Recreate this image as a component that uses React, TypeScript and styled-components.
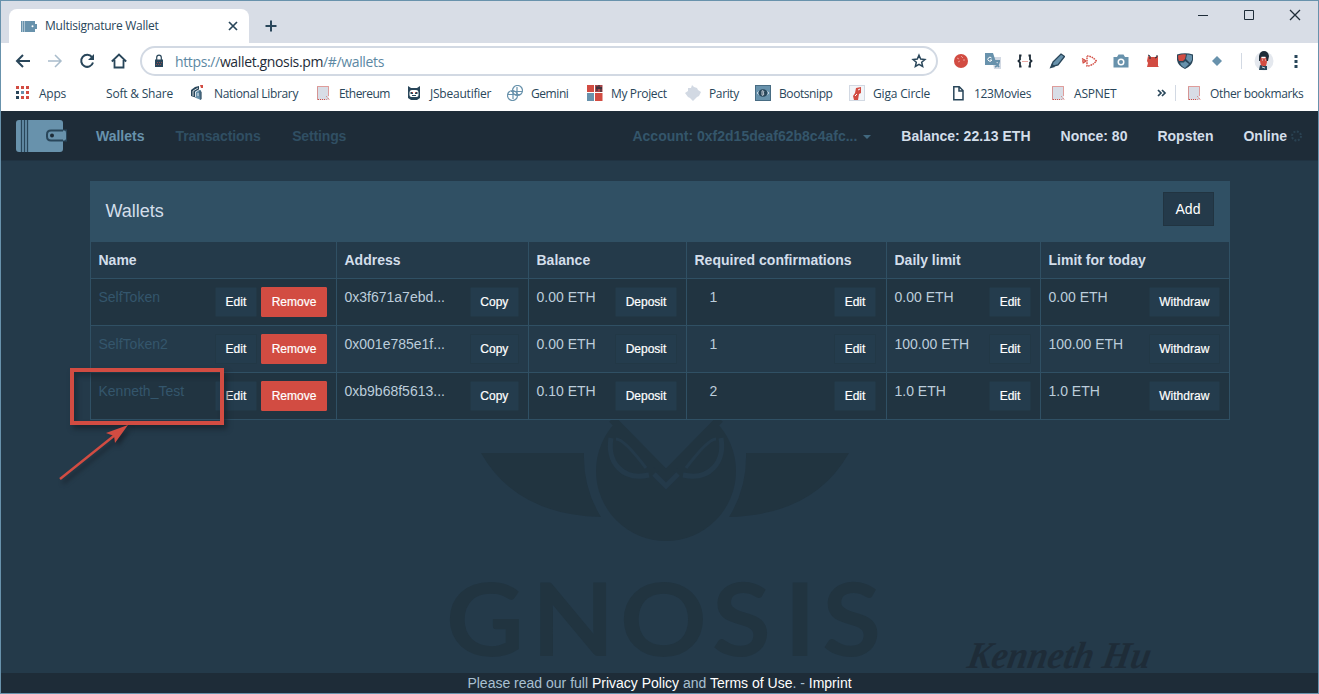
import React from "react";
import styled, { createGlobalStyle } from "styled-components";

const c = {
  blue: "#6892ac",
  strip: "#d8dde6",
  line: "#d2d9e3",
  ink: "#29465a",
  body: "#243a4a",
  nav: "#1e2c38",
  panel: "#305064",
  dark: "#213441",
  red: "#d24c42",
  pale: "#d3deea",
};

const Global = createGlobalStyle`
  *{box-sizing:border-box}
  body{margin:0;background:${c.body};overflow:hidden}
`;

const Window = styled.div`
  width: 1319px;
  height: 694px;
  border: 1px solid ${c.blue};
  display: flex;
  flex-direction: column;
  position: relative;
  background: ${c.body};
  font-family: "Liberation Sans", Arial, sans-serif;
`;

/* ---- browser chrome ---- */
const TabStrip = styled.div`
  height: 42px;
  flex: none;
  background: ${c.strip};
  display: flex;
  padding-left: 8px;
  font-family: "Open Sans", sans-serif;
`;
const Tab = styled.div`
  width: 240px;
  height: 34px;
  margin-top: 8px;
  background: #fff;
  border-radius: 8px 8px 0 0;
  display: flex;
  align-items: center;
  padding: 0 10px 1px 11px;
`;
const TabTitle = styled.span`
  flex: 1;
  margin-left: 8px;
  font-size: 12px;
  letter-spacing: -0.26px;
  color: ${c.ink};
  white-space: nowrap;
`;
const NewTab = styled.div`
  margin: 18px 0 0 15px;
  height: 14px;
  display: flex;
`;
const WindowButtons = styled.div`
  margin-left: auto;
  display: flex;
  gap: 34px;
  padding: 8px 17px 0 0;
  height: 20px;
`;
const Toolbar = styled.div`
  height: 37px;
  flex: none;
  background: #fff;
  display: flex;
  align-items: center;
  padding: 0 14px 1px 14px;
`;
const NavIcons = styled.div`
  display: flex;
  gap: 16px;
  width: 125px;
`;
const Omnibox = styled.div`
  width: 798px;
  height: 30px;
  border: 2px solid ${c.line};
  border-radius: 15px;
  display: flex;
  align-items: center;
  padding: 0 9px 0 10px;
`;
const Url = styled.span`
  flex: 1;
  margin-left: 9px;
  font: 14px "Open Sans", sans-serif;
  letter-spacing: -0.36px;
  color: #5c88a3;
  b {
    font-weight: 400;
    color: ${c.nav};
  }
`;
const Extensions = styled.div`
  display: flex;
  gap: 16px;
  margin-left: 15px;
`;
const Divider = styled.i<{ $gap: string }>`
  width: 1px;
  height: 16px;
  background: ${c.line};
  margin: ${(p) => p.$gap};
`;
const Bookmarks = styled.div`
  height: 31px;
  flex: none;
  background: #fff;
  display: flex;
  align-items: center;
  padding: 0 0 5px 14px;
`;
const Bookmark = styled.div<{ $w: number; $ls: number }>`
  width: ${(p) => p.$w}px;
  display: flex;
  align-items: center;
  gap: 8px;
  font: 12px "Open Sans", sans-serif;
  letter-spacing: ${(p) => p.$ls}px;
  color: ${c.ink};
  white-space: nowrap;
  svg {
    flex: none;
  }
`;

/* ---- wallet application ---- */
const NavBar = styled.nav`
  height: 50px;
  flex: none;
  background: ${c.nav};
  border-bottom: 1px solid #203342;
  display: flex;
  align-items: center;
  padding: 0 15px;
`;
const NavItem = styled.span<{ $tone?: string; $ls?: number; $ml?: number }>`
  font-size: 14px;
  font-weight: 700;
  line-height: 47px;
  padding-top: 2px;
  white-space: nowrap;
  color: ${(p) => p.$tone ?? c.pale};
  letter-spacing: ${(p) => p.$ls ?? 0}px;
  margin-left: ${(p) => p.$ml ?? 30}px;
`;
const Caret = styled.i`
  border: 4px solid transparent;
  border-top-color: #41687f;
  border-bottom: 0;
  margin-left: 6px;
  margin-top: 2px;
`;
const NavRight = styled.div`
  margin-left: auto;
  display: flex;
  align-items: center;
`;
const Main = styled.main`
  flex: 1;
  position: relative;
  padding: 20px 0 0 89px;
`;
const Watermark = styled.svg`
  position: absolute;
  left: 0;
  top: 0;
  overflow: visible;
`;
const Panel = styled.section`
  width: 1140px;
  position: relative;
  border: 1px solid ${c.panel};
`;
const PanelHead = styled.header`
  height: 60px;
  background: ${c.panel};
  display: flex;
  justify-content: space-between;
  align-items: flex-start;
  padding: 10px 15px 0 14.5px;
  font-size: 18px;
  line-height: 38px;
  color: ${c.pale};
`;
const AddButton = styled.button`
  width: 51px;
  height: 34px;
  padding: 0 1px 0 0;
  border: 1px solid ${c.dark};
  background: ${c.body};
  color: #fff;
  font: 14px "Liberation Sans", Arial, sans-serif;
`;
const Row = styled.div<{ $head?: boolean; $odd?: boolean }>`
  display: grid;
  grid-template-columns: 246px 192px 158px 200px 154px 188px;
  height: ${(p) => (p.$head ? 37 : 47)}px;
  border-bottom: 1px solid ${c.panel};
  background: ${(p) => (p.$odd ? c.dark : c.body)};
  font-size: 14px;
  font-weight: ${(p) => (p.$head ? 700 : 400)};
  line-height: 20px;
  color: ${(p) => (p.$head ? c.pale : "#bccddb")};
  &:last-child {
    height: 46px;
    border-bottom: 0;
  }
`;
const Cell = styled.div<{ $indent?: boolean }>`
  display: flex;
  gap: 4px;
  padding: 8px ${(p) => (p.$indent ? 10 : 9)}px 0 ${(p) => (p.$indent ? 22.5 : 7.5)}px;
  border-right: 1px solid ${c.panel};
  white-space: nowrap;
  &:last-child {
    border-right: 0;
  }
`;
const Value = styled.span<{ $dim?: boolean }>`
  margin-right: auto;
  color: ${(p) => (p.$dim ? "#34566c" : "inherit")};
`;
const Button = styled.button<{ $danger?: boolean }>`
  height: 30px;
  padding: 0 9.7px;
  border: 1px solid ${(p) => (p.$danger ? c.red : "#223846")};
  border-radius: 1px;
  background: ${(p) => (p.$danger ? c.red : "#243c4d")};
  color: #fff;
  font: 12px "Liberation Sans", Arial, sans-serif;
  -webkit-text-stroke: 0.2px #fff;
`;
const Footer = styled.footer`
  height: 20px;
  flex: none;
  position: relative;
  background: ${c.nav};
  color: #a9c0d1;
  font-size: 14px;
  line-height: 20px;
  text-align: center;
  b {
    font-weight: 400;
    color: #fff;
  }
`;
const Highlight = styled.div`
  position: absolute;
  left: 69px;
  top: 367px;
  width: 154px;
  height: 57px;
  border: 4px solid ${c.red};
  box-shadow: 3px 4px 5px #18242ecc, inset 3px 4px 5px #18242e99;
`;
const Arrow = styled.svg`
  position: absolute;
  left: 50px;
  top: 420px;
  filter: drop-shadow(3px 4px 2px #1a2631);
`;

const stroke = { fill: "none", stroke: c.ink, strokeWidth: 2 };

const NewDoc = () => (
  <path d="M3.800 1.700h5.400l3.800 3.800v9.300H3.800zM9 2v4h4" fill="none" stroke={c.ink} strokeWidth="1.500" />
);
const Folder = () => (
  <>
    <path d="M2 1.500h11.500v13.500H2z" fill={c.strip} />
    <path d="M2.500 14.500v-13h11v9M3 14.500h8.500M11.500 11.500l3 3.500" fill="none" stroke={c.red} strokeDasharray="1 1" />
  </>
);

const art: Record<string, React.ReactNode> = {
  none: null,
  apps: [0, 1, 2].map((y) =>
    [0, 1, 2].map((x) => (
      <rect key={`${x}${y}`} x={1 + x * 5} y={1 + y * 5} width="3" height="3"
        fill={y === 0 || x === 2 || (y === 2 && x === 1) ? c.red : x === 0 ? c.ink : c.blue} />
    ))
  ),
  library: (
    <>
      <path d="M1 5l4-3 4-1v11l-2 1-6-2z" fill={c.ink} />
      <path d="M5 6l6-1v10l-5-2z" fill={c.blue} />
      <path d="M3 11V6l5-3M5.500 12V7l4-2.500M8 11V8" stroke="#fff" strokeWidth=".8" fill="none" />
      <path d="M10 0h3v3h-2z" fill={c.red} />
      <path d="M9 5l3 2v7l-2 1z" fill={c.ink} opacity=".6" />
    </>
  ),
  folder: <Folder />,
  doc: <NewDoc />,
  js: (
    <>
      <path d="M2 1l3 2h6l3-2v12l-3 2H5l-3-2z" fill={c.ink} />
      <path d="M3.500 8q0-3 2.500-3h4q2.500 0 2.500 3v2q0 2-2 2h-5q-2 0-2-2z" fill="#fff" />
      <path d="M4.500 7h2.500v2H4.500zM9 7h2.500v2H9z" fill={c.ink} />
      <path d="M6 7.500h1M9 7.500h1" stroke={c.red} />
      <path d="M6 10.500h4" stroke={c.ink} />
    </>
  ),
  gemini: (
    <g fill="none" stroke={c.blue} strokeWidth="1.200">
      <circle cx="10.500" cy="5.500" r="5" />
      <circle cx="5.500" cy="10.500" r="5" />
      <path d="M1 9.500h12M4 6.500h11M6 5v9M10 2v9" />
    </g>
  ),
  project: (
    <>
      <path d="M0 0h7v7H0zM8 8h7.500v8H8z" fill={c.red} />
      <path d="M8 0h7.500v7H8z" fill="#a8474a" />
      <path d="M10 1v5M12 0v4M14 2v5M9 3h6" stroke={c.nav} />
      <path d="M0 8h7v8H0z" fill={c.blue} />
    </>
  ),
  parity: <path d="M7 0l2 2 3 1 1 2 3 2-2 4-2 1-4 4-3-3-2-1-3-4 3-2V3h3z" fill={c.line} />,
  boots: (
    <>
      <rect width="16" height="16" fill={c.blue} />
      <rect x=".5" y=".5" width="15" height="15" fill="none" stroke={c.ink} strokeDasharray="1 1" />
      <ellipse cx="8" cy="8" rx="4.200" ry="3.700" fill={c.ink} />
      <path d="M3.500 6.500L2 8l1.500 1.500M12.500 6.500L14 8l-1.500 1.500M7 5.800h1.200q1.300 1 0 2.100 1.500 1 0 2.300H7z" fill="none" stroke={c.line} strokeWidth=".9" />
    </>
  ),
  giga: (
    <>
      <rect x=".5" y=".5" width="15" height="15" fill="#f3f5f8" stroke={c.line} />
      <path d="M7 3l5-1v6l-2 1-1 6H5l-1-4 2-3z" fill={c.red} />
      <path d="M6 11l2-2M9 5l2-1" stroke="#fff" />
    </>
  ),
};

const Glyph = ({ name }: { name: string }) => (
  <svg width="16" height="16" viewBox="0 0 16 16">{art[name]}</svg>
);

const bookmarks: [string, string, number, number][] = [
  ["apps", "Apps", 67, -0.25],
  ["none", "Soft & Share", 108, -0.2],
  ["library", "National Library", 125, -0.34],
  ["folder", "Ethereum", 91, -0.55],
  ["js", "JSbeautifier", 101, -0.22],
  ["gemini", "Gemini", 80, -0.42],
  ["project", "My Project", 98, -0.35],
  ["parity", "Parity", 70, -0.38],
  ["boots", "Bootsnipp", 94, -0.42],
  ["giga", "Giga Circle", 101, -0.18],
  ["doc", "123Movies", 100, -0.33],
  ["folder", "ASPNET", 106, -0.2],
];

const extensions: React.ReactNode[] = [
  <><circle cx="8" cy="8" r="7" fill={c.red} /><path d="M4 5l2 1M8 3l2 2M10 7h2M5 9l2-1" stroke="#e99b94" /></>,
  <><path d="M7 4h9v12H9z" fill={c.line} /><path d="M0 0h8l4 12H0z" fill={c.blue} /><path d="M8 8h7M12 7v2M10 14q4-2 4-6M10 9l4 5" stroke={c.blue} strokeWidth="1.800" fill="none" /><path d="M6.500 5A2 2 0 1 0 6.800 7H5" fill="none" stroke="#fff" /></>,
  <><path d="M4.500 2.500H3v4L1.500 8 3 9.500v4h1.500M11.500 2.500H13v4L14.500 8 13 9.500v4h-1.500" fill="none" stroke={c.nav} strokeWidth="1.800" /><path d="M5.500 8.500h1M7.500 8.500h1M9.500 8.500h1" stroke={c.red} /></>,
  <><path d="M4 9l8-8 3.500 2.500L9 12l-4 1-2-1z" fill={c.blue} stroke={c.ink} strokeWidth="1.300" /><path d="M3 10l3 4-5.500 1.500z" fill={c.ink} /></>,
  <g fill="none" stroke={c.red} strokeWidth="1.400" strokeDasharray="1.600 .8"><path d="M6 3q5 0 9.500 5-4.500 5-9.500 5V3M1 5.500l4 2.500-4 2.500M3 6v4M1 8h5" /></g>,
  <><path d="M.5 4H4l1.500-2.500h5L12 4h3.500v10.500H.5z" fill={c.blue} /><circle cx="8" cy="9" r="3.500" fill="#fff" /><circle cx="8" cy="9" r="2" fill={c.blue} /></>,
  <><path d="M3 3l3 1h4l3-1v10l1 1H2l1-4-1-2z" fill={c.red} /><path d="M3 2l2 1v3M12 2v2l-2 1" stroke={c.nav} fill="none" /></>,
  <><path d="M0 1.500Q8-1 16 1.500V7q-1 6-8 9-7-3-8-9z" fill={c.ink} /><path d="M1 2.500q5-2 8-1L8 6l-2 2H2Q1 6 1 2.500z" fill={c.red} /><path d="M10 1.500q3 0 5 1V7l-2 3-4-4z" fill={c.blue} /><path d="M3 9.500h4l1-1.500 4 3-4 4q-4-2-5-5.500z" fill={c.blue} /></>,
  <path d="M8 3l5 5-5 5-5-5z" fill={c.blue} />,
];

const BookmarkItem = ({ item }: { item: [string, string, number, number] }) => (
  <Bookmark $w={item[2]} $ls={item[3]}>
    <Glyph name={item[0]} />
    {item[1]}
  </Bookmark>
);

const wallets = [
  { name: "SelfToken", address: "0x3f671a7ebd...", balance: "0.00 ETH", confirmations: "1", daily: "0.00 ETH", today: "0.00 ETH" },
  { name: "SelfToken2", address: "0x001e785e1f...", balance: "0.00 ETH", confirmations: "1", daily: "100.00 ETH", today: "100.00 ETH" },
  { name: "Kenneth_Test", address: "0xb9b68f5613...", balance: "0.10 ETH", confirmations: "2", daily: "1.0 ETH", today: "1.0 ETH" },
];
const columns = ["Name", "Address", "Balance", "Required confirmations", "Daily limit", "Limit for today"];

export default function App() {
  return (
    <Window>
      <Global />
      <TabStrip>
        <Tab>
          <svg width="17" height="12" viewBox="0 0 17 12">
            <path d="M1 1h14v3h2v5h-2v3H1z" fill={c.blue} />
            <path d="M2.500 1v11M4.500 1v11" stroke="#c6d5e0" strokeWidth=".7" />
            <circle cx="12.500" cy="6.200" r="1" fill="#fff" />
          </svg>
          <TabTitle>Multisignature Wallet</TabTitle>
          <svg width="12" height="12" viewBox="0 0 12 12"><path d="M2 2l8 8M10 2l-8 8" {...stroke} strokeWidth="1.700" /></svg>
        </Tab>
        <NewTab>
          <svg width="14" height="14" viewBox="0 0 14 14"><path d="M7 1.500v11M1.500 7h11" {...stroke} /></svg>
        </NewTab>
        <WindowButtons>
          <svg width="12" height="12" viewBox="0 0 12 12"><path d="M1 6.500h10" stroke={c.nav} /></svg>
          <svg width="12" height="12" viewBox="0 0 12 12"><path d="M1.500 1.500h9v9h-9z" fill="none" stroke={c.nav} /></svg>
          <svg width="12" height="12" viewBox="0 0 12 12"><path d="M1 1l10 10M11 1L1 11" stroke={c.nav} strokeWidth="1.300" /></svg>
        </WindowButtons>
      </TabStrip>

      <Toolbar>
        <NavIcons>
          <svg width="16" height="16" viewBox="0 0 16 16"><path d="M15 8H2M8 2L2 8l6 6" {...stroke} /></svg>
          <svg width="16" height="16" viewBox="0 0 16 16"><path d="M1 8h13M8 2l6 6-6 6" {...stroke} stroke="#a9bccb" strokeWidth="1.500" /></svg>
          <svg width="16" height="16" viewBox="0 0 16 16"><path d="M13 4.200A6 6 0 1 0 14 9.500" {...stroke} /><path d="M15 1v6H9z" fill={c.ink} /></svg>
          <svg width="16" height="16" viewBox="0 0 16 16"><path d="M.8 8.500L8 1.500l7.200 7M3.500 7v7.500h9V7" {...stroke} strokeWidth="1.800" /></svg>
        </NavIcons>
        <Omnibox>
          <svg width="14" height="14" viewBox="0 0 14 14">
            <path d="M3 5.500h8V13H3z" fill={c.ink} />
            <path d="M4.700 6V3.500a2.300 2.300 0 0 1 4.600 0V6" fill="none" stroke={c.ink} strokeWidth="1.200" />
            <path d="M5 8.500h5M4 10.500h5" stroke="#8f4a4c" strokeDasharray="1 1" />
          </svg>
          <Url>https://<b>wallet.gnosis.pm</b>/#/wallets</Url>
          <svg width="16" height="16" viewBox="0 0 16 16">
            <path d="M8 2.200l1.700 3.900 4.200.400-3.200 2.800.950 4.200L8 11.300l-3.650 2.200.950-4.200-3.200-2.800 4.200-.400z" fill="none" stroke={c.ink} strokeWidth="1.500" />
          </svg>
        </Omnibox>
        <Extensions>
          {extensions.map((e, i) => (
            <svg key={i} width="16" height="16" viewBox="0 0 16 16">{e}</svg>
          ))}
        </Extensions>
        <Divider $gap="0 12px 0 16px" />
        <svg width="20" height="20" viewBox="0 0 20 20">
          <circle cx="10" cy="10" r="9.500" fill="#e4e8ee" />
          <path d="M5 10V5q1-5 5-5t5 5l-1 5z" fill={c.nav} />
          <path d="M7 6h5l1 5-1 4H7l-1-5z" fill={c.red} />
          <path d="M7.500 6.500h4" stroke="#fff" strokeWidth="1.500" />
          <path d="M6 14l3 1h4v4H5z" fill={c.ink} />
          <path d="M8 9h1M11 9h1M8 16l3 1" stroke={c.line} />
        </svg>
        <svg width="16" height="16" viewBox="0 0 16 16" style={{ marginLeft: "auto" }}>
          <path d="M6.500 2h3v3h-3zM6.500 7h3v3h-3zM6.500 12h3v3h-3z" fill={c.ink} />
        </svg>
      </Toolbar>

      <Bookmarks>
        {bookmarks.map((b) => <BookmarkItem key={b[1]} item={b} />)}
        <svg width="12" height="12" viewBox="0 0 12 12"><path d="M2 3l3 3-3 3M6 3l3 3-3 3" {...stroke} strokeWidth="1.700" /></svg>
        <Divider $gap="0 10px 0 7px" />
        <BookmarkItem item={["folder", "Other bookmarks", 120, -0.34]} />
      </Bookmarks>

      <NavBar>
        <svg width="51" height="34" viewBox="0 0 51 34">
          <rect x="0" y="1" width="47" height="32" rx="3" fill={c.blue} />
          <path d="M5.500 1v32M8.500 1v32M11.500 1v32" stroke={c.ink} strokeWidth="1.300" />
          <path d="M50 11.500H35q-4 0-4 4v2q0 4 4 4h15z" fill={c.blue} stroke={c.ink} strokeWidth="2" />
          <path d="M47 11.500h1q2 0 2 2v6q0 2-2 2h-1z" fill={c.blue} />
          <circle cx="36" cy="16.500" r="2" fill={c.nav} />
        </svg>
        <NavItem $tone={c.blue} $ml={29}>Wallets</NavItem>
        <NavItem $tone="#304f63" $ml={31} $ls={-0.1}>Transactions</NavItem>
        <NavItem $tone="#304f63" $ml={31.500} $ls={-0.15}>Settings</NavItem>
        <NavRight>
          <NavItem $tone="#34566b">Account: 0xf2d15deaf62b8c4afc...</NavItem>
          <Caret />
          <NavItem>Balance: 22.13 ETH</NavItem>
          <NavItem>Nonce: 80</NavItem>
          <NavItem>Ropsten</NavItem>
          <NavItem>Online</NavItem>
          <svg width="16" height="14" viewBox="0 0 16 14"><circle cx="9.500" cy="7" r="4.500" fill="none" stroke="#2a4252" strokeWidth="2" strokeDasharray="2 1.500" /></svg>
        </NavRight>
      </NavBar>

      <Main>
        <Watermark width="1317" height="513" viewBox="1 161 1317 513" fill="#213440">
          <path d="M481 453h103q-1 35 17 64-85-2-120-64zM849 453H746q1 35-17 64 85-2 120-64z" />
          <circle cx="666" cy="471" r="70" />
          <path d="M617 419l49 52 49-52z" fill={c.body} />
          <g fill="none" stroke={c.body} strokeWidth="5">
            <path d="M610 436c-5 26 12 46 39 39M722 436c5-26-12-46-39 39" stroke="none" />
            <path d="M611 438c-4 24 11 43 38 37M721 438c4 24-11 43-38 37" />
            <path d="M616 439q8 0 30 29M716 439q-8 0-30 29" strokeWidth="3" />
            <path d="M654 474l12 12 12-12" />
          </g>
          <path d="M612 419l54 55 54-55" fill="none" stroke="#213440" strokeWidth="8" />
          <text y="656" x="416.600 496.700 579.200 665.200 732.700 768.200" transform="scale(1.07 1)" fontFamily="Lato, sans-serif" fontWeight="700" fontSize="101">GNOSIS</text>
          <text x="0" y="0" transform="translate(966 668) skewX(-10)" fill="#1e2c38" fontFamily="Liberation Serif, serif" fontStyle="italic" fontWeight="700" fontSize="38" textLength="183" lengthAdjust="spacingAndGlyphs">Kenneth Hu</text>
        </Watermark>
        <Panel>
          <PanelHead>
            Wallets
            <AddButton>Add</AddButton>
          </PanelHead>
          <Row $head>
            {columns.map((h) => <Cell key={h}>{h}</Cell>)}
          </Row>
          {wallets.map((w, i) => (
            <Row key={w.name} $odd={i % 2 === 0}>
              <Cell><Value $dim>{w.name}</Value><Button>Edit</Button><Button $danger>Remove</Button></Cell>
              <Cell><Value>{w.address}</Value><Button>Copy</Button></Cell>
              <Cell><Value>{w.balance}</Value><Button>Deposit</Button></Cell>
              <Cell $indent><Value>{w.confirmations}</Value><Button>Edit</Button></Cell>
              <Cell><Value>{w.daily}</Value><Button>Edit</Button></Cell>
              <Cell><Value>{w.today}</Value><Button>Withdraw</Button></Cell>
            </Row>
          ))}
        </Panel>
      </Main>

      <Footer>
        Please read our full <b>Privacy Policy</b> and <b>Terms of Use</b>. - <b>Imprint</b>
      </Footer>

      <Highlight />
      <Arrow width="90" height="70" viewBox="51 421 90 70">
        <path d="M60 479l55-44" stroke={c.red} strokeWidth="2.500" />
        <path d="M128 425l-13 18-1-7-8-3z" fill={c.red} />
      </Arrow>
    </Window>
  );
}
